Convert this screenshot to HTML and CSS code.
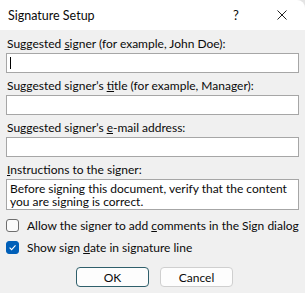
FILE: index.html
```html
<!DOCTYPE html>
<html>
<head>
<meta charset="utf-8">
<link rel="stylesheet" href="styles.css">
</head>
<body>
<div class="dialog">
  <div class="titlebar">
    <span class="title">Signature Setup</span>
    <span class="help">?</span>
    <span class="close">
      <svg width="10" height="10" viewBox="0 0 10 10"><path d="M0.5 0.5 L9.5 9.5 M9.5 0.5 L0.5 9.5" stroke="#222" stroke-width="1" fill="none"/></svg>
    </span>
  </div>
  <div class="content">
    <div class="field">
      <label class="label">Suggested <u>s</u>igner (for example, John Doe):</label>
      <div class="input"><span class="caret"></span></div>
    </div>
    <div class="field">
      <label class="label">Suggested signer’s <u>t</u>itle (for example, Manager):</label>
      <div class="input"></div>
    </div>
    <div class="field">
      <label class="label">Suggested signer’s <u>e</u>-mail address:</label>
      <div class="input"></div>
    </div>
    <div class="field">
      <label class="label"><u>I</u>nstructions to the signer:</label>
      <div class="textarea">Before signing this document, verify that the content you are signing is correct.</div>
    </div>
    <div class="check">
      <span class="box"></span>
      <span>Allow the signer to add <u>c</u>omments in the Sign dialog</span>
    </div>
    <div class="check">
      <span class="box checked">
        <svg width="9" height="9" viewBox="0 0 9 9"><path d="M1.6 4.7 L3.6 6.6 L7.5 2.4" stroke="#fff" stroke-width="1.1" fill="none"/></svg>
      </span>
      <span>Show sign <u>d</u>ate in signature line</span>
    </div>
    <div class="buttons">
      <button class="btn primary">OK</button>
      <button class="btn">Cancel</button>
    </div>
  </div>
</div>
</body>
</html>
```
FILE: styles.css
```css
html, body {
  margin: 0;
  padding: 0;
  background: #e4e4e4;
}
body {
  font-family: Lato, "Noto Sans", sans-serif;
  font-size: 12px;
  color: #0a0a0a;
}
.dialog {
  width: 305px;
  height: 293px;
  overflow: hidden;
}
.titlebar {
  height: 30px;
  background: #ffffff;
  display: flex;
  align-items: center;
  padding-left: 8px;
  box-sizing: border-box;
  border-top-right-radius: 8px;
}
.title {
  font-size: 12.5px;
  flex: 1;
}
.help {
  font-size: 13px;
  width: 8px;
  text-align: center;
  margin-right: 37px;
}
.close {
  width: 10px;
  height: 10px;
  margin-right: 18px;
  display: flex;
}
.content {
  background: #f0f0f0;
  height: 263px;
  box-sizing: border-box;
  padding: 6px 6px 0 6px;
}
.field {
  display: flex;
  flex-direction: column;
}
.label {
  display: block;
  height: 16px;
  line-height: 16px;
  padding-left: 1px;
  margin-bottom: 1px;
  white-space: nowrap;
}
.input {
  height: 20px;
  background: #fff;
  border: 1px solid #a6a6a6;
  box-sizing: border-box;
  margin-bottom: 5px;
  position: relative;
}
.caret {
  position: absolute;
  left: 3px;
  top: 3px;
  width: 1px;
  height: 12px;
  background: #000;
}
.textarea {
  height: 31px;
  background: #fff;
  border: 1px solid #a6a6a6;
  box-sizing: border-box;
  padding: 2px 3px 0 3px;
  line-height: 13px;
  margin-bottom: 4px;
}
.check {
  display: flex;
  align-items: center;
  height: 22px;
  gap: 8px;
  white-space: nowrap;
}
.box {
  flex-shrink: 0;
  width: 13px;
  height: 13px;
  box-sizing: border-box;
  border: 1px solid #6e6e6e;
  border-radius: 3px;
  background: #fbfbfb;
  display: flex;
  align-items: center;
  justify-content: center;
}
.box.checked {
  background: #005fb8;
  border-color: #005fb8;
}
.buttons {
  display: flex;
  justify-content: center;
  gap: 11px;
  margin-top: 9px;
  padding-left: 4px;
}
.btn {
  width: 73px;
  height: 20px;
  font-family: inherit;
  font-size: 12px;
  background: #fdfdfd;
  border: 1px solid #cfcfcf;
  border-radius: 4px;
  padding: 0;
  color: #0a0a0a;
}
.btn.primary {
  border: 1px solid #2f5f6b;
}
```
